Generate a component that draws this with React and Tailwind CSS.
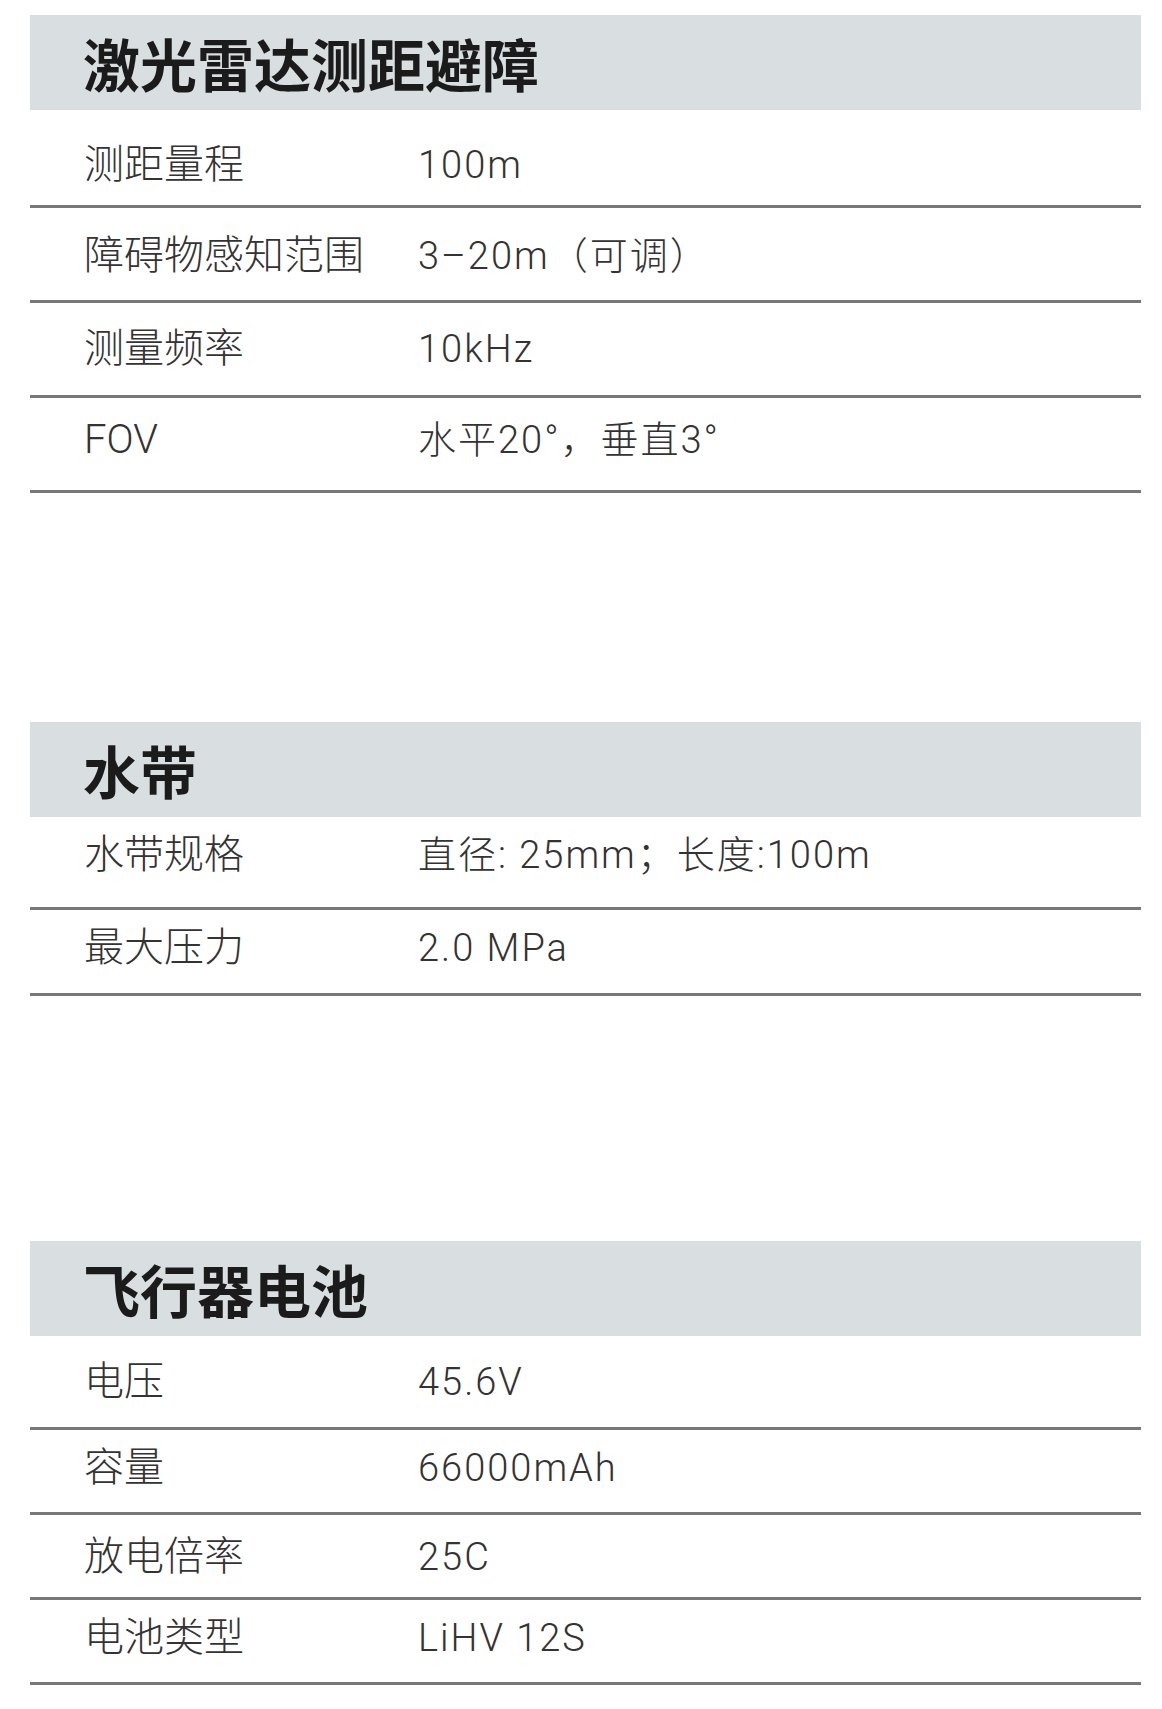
import React from "react";

const sections = [
  {
    title: "激光雷达测距避障",
    mt: "mt-[15px]",
    rows: [
      { label: "测距量程", value: "100m", cls: "h-[98px] pt-[15px]" },
      { label: "障碍物感知范围", value: "3–20m（可调）", cls: "h-[95px] pt-[4px]" },
      { label: "测量频率", value: "10kHz", cls: "h-[95px]" },
      { label: "FOV", value: "水平20°，垂直3°", cls: "h-[95px] pb-[8px]" },
    ],
  },
  {
    title: "水带",
    mt: "mt-[229px]",
    rows: [
      { label: "水带规格", value: "直径: 25mm；长度:100m", cls: "h-[93px] pb-[14px]" },
      { label: "最大压力", value: "2.0 MPa", cls: "h-[86px] pb-[7px]" },
    ],
  },
  {
    title: "飞行器电池",
    mt: "mt-[245px]",
    rows: [
      { label: "电压", value: "45.6V", cls: "h-[94px]" },
      { label: "容量", value: "66000mAh", cls: "h-[85px] pb-[6px]" },
      { label: "放电倍率", value: "25C", cls: "h-[85px] pt-[2px]" },
      { label: "电池类型", value: "LiHV 12S", cls: "h-[85px] pb-[6px]" },
    ],
  },
];

export default function App() {
  return (
    <div className="w-[1162px] bg-white pb-[24px] font-['Roboto','Noto_Sans_CJK_SC',sans-serif]">
      {sections.map((s) => (
        <section key={s.title} className={`${s.mt} ml-[30px] w-[1111px]`}>
          <div className="h-[95px] bg-[#d9dee0] flex items-center pl-[53px]">
            <h2 className="text-[57px] leading-none font-bold text-[#1b1b1b] font-['Noto_Sans_CJK_SC',sans-serif]">
              {s.title}
            </h2>
          </div>
          {s.rows.map((r) => (
            <div
              key={r.label}
              className={`${r.cls} box-border flex items-center border-b-[3px] border-[#787878] text-[#333333]`}
            >
              <div className="w-[388px] pl-[54px] text-[40px] leading-none font-light font-['Roboto','Noto_Sans_CJK_SC_Light','Noto_Sans_CJK_SC_DemiLight','Noto_Sans_CJK_SC',sans-serif]">
                {r.label}
              </div>
              <div className="text-[38px] tracking-[2px] leading-none font-light font-['Roboto','Noto_Sans_CJK_SC_Light','Noto_Sans_CJK_SC_DemiLight','Noto_Sans_CJK_SC',sans-serif]">
                {r.value}
              </div>
            </div>
          ))}
        </section>
      ))}
    </div>
  );
}
